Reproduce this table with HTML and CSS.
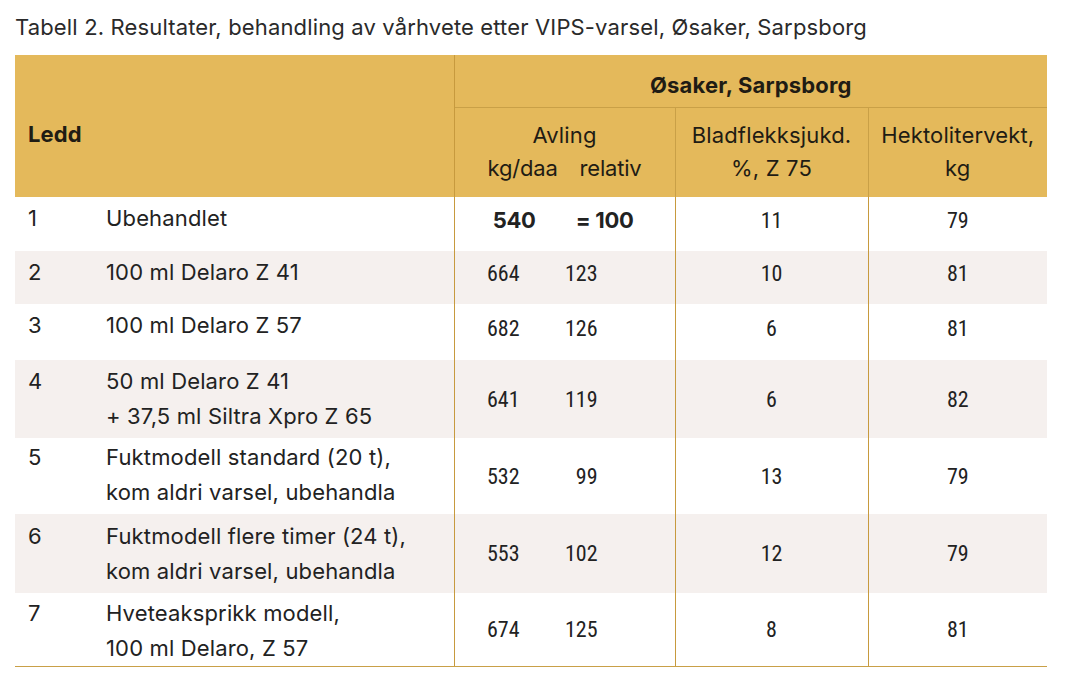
FILE: index.html
```html
<!DOCTYPE html>
<html lang="no">
<head>
<meta charset="utf-8">
<title>Tabell 2</title>
<link rel="stylesheet" href="styles.css">
</head>
<body>
<div class="page">
  <p class="caption">Tabell 2. Resultater, behandling av vårhvete etter VIPS-varsel, Øsaker, Sarpsborg</p>
  <table class="results">
    <colgroup>
      <col class="c-nr">
      <col class="c-desc">
      <col class="c-avl">
      <col class="c-blad">
      <col class="c-hekt">
    </colgroup>
    <thead>
      <tr class="h1">
        <th class="ledd" colspan="2" rowspan="2">Ledd</th>
        <th class="site" colspan="3">Øsaker, Sarpsborg</th>
      </tr>
      <tr class="h2">
        <th class="sub">Avling<br><span class="pair"><span class="a">kg/daa</span><span class="b">relativ</span></span></th>
        <th class="sub">Bladflekksjukd.<br>%, Z 75</th>
        <th class="sub last">Hektolitervekt,<br>kg</th>
      </tr>
    </thead>
    <tbody>
      <tr class="r1 single">
        <td class="nr">1</td><td class="desc">Ubehandlet</td>
        <td class="num avl ref"><span class="v1">540</span><span class="v2">= 100</span></td>
        <td class="num">11</td><td class="num">79</td>
      </tr>
      <tr class="r2 single alt">
        <td class="nr">2</td><td class="desc">100 ml Delaro Z 41</td>
        <td class="num avl"><span class="v1">664</span><span class="v2">123</span></td>
        <td class="num">10</td><td class="num">81</td>
      </tr>
      <tr class="r3 single">
        <td class="nr">3</td><td class="desc">100 ml Delaro Z 57</td>
        <td class="num avl"><span class="v1">682</span><span class="v2">126</span></td>
        <td class="num">6</td><td class="num">81</td>
      </tr>
      <tr class="r4 alt">
        <td class="nr">4</td><td class="desc">50 ml Delaro Z 41<br>+ 37,5 ml Siltra Xpro Z 65</td>
        <td class="num avl"><span class="v1">641</span><span class="v2">119</span></td>
        <td class="num">6</td><td class="num">82</td>
      </tr>
      <tr class="r5">
        <td class="nr">5</td><td class="desc">Fuktmodell standard (20 t),<br>kom aldri varsel, ubehandla</td>
        <td class="num avl"><span class="v1">532</span><span class="v2">99</span></td>
        <td class="num">13</td><td class="num">79</td>
      </tr>
      <tr class="r6 alt">
        <td class="nr">6</td><td class="desc">Fuktmodell flere timer (24 t),<br>kom aldri varsel, ubehandla</td>
        <td class="num avl"><span class="v1">553</span><span class="v2">102</span></td>
        <td class="num">12</td><td class="num">79</td>
      </tr>
      <tr class="r7">
        <td class="nr">7</td><td class="desc">Hveteaksprikk modell,<br>100 ml Delaro, Z 57</td>
        <td class="num avl"><span class="v1">674</span><span class="v2">125</span></td>
        <td class="num">8</td><td class="num">81</td>
      </tr>
    </tbody>
  </table>
</div>
</body>
</html>
```

FILE: styles.css
```css
html, body {
  margin: 0;
  padding: 0;
  background: #ffffff;
}

body {
  font-family: "Inter", "Noto Sans", sans-serif;
  color: #222222;
  letter-spacing: 0.15px;
}

.page {
  padding: 0 31px 0 15px;
}

.caption {
  margin: 0;
  height: 55px;
  box-sizing: border-box;
  padding-top: 14px;
  font-size: 22px;
  line-height: 26px;
  color: #2a2a2a;
}

.results {
  width: 1032px;
  border-collapse: collapse;
  table-layout: fixed;
  font-size: 22px;
}

.c-nr { width: 78px; }
.c-desc { width: 361px; }
.c-avl { width: 221px; }
.c-blad { width: 193px; }
.c-hekt { width: 179px; }

thead th {
  background: #e4b95b;
  color: #1f1c14;
  font-weight: 400;
  padding: 0;
}

.h1 { height: 52px; }
.h2 { height: 90px; }

.ledd {
  text-align: left;
  padding: 16px 0 0 13px;
  font-weight: 700;
  vertical-align: middle;
  border-right: 1px solid #c79a3e;
}

.site {
  font-weight: 700;
  text-align: center;
  padding-top: 8px;
  border-bottom: 1px solid #c9a047;
}

.sub {
  line-height: 33px;
  text-align: center;
  vertical-align: middle;
  border-right: 1px solid #c9a047;
}

.sub.last { border-right: none; }

.pair {
  display: inline-flex;
  gap: 22px;
  letter-spacing: -0.2px;
}

tbody td {
  padding: 0;
  line-height: 35px;
}

tbody tr.alt td { background: #f5f0ee; }

.r1 { height: 54px; }
.r2 { height: 53px; }
.r3 { height: 56px; }
.r4 { height: 78px; }
.r5 { height: 76px; }
.r6 { height: 79px; }
.r7 { height: 72px; }

.nr, .desc {
  vertical-align: top;
  padding-top: 4px;
  padding-left: 13px;
}

.r5 .nr, .r5 .desc { padding-top: 2px; }
.r6 .nr, .r6 .desc { padding-top: 5px; }
.r7 .nr, .r7 .desc { padding-top: 3px; }

.desc {
  border-right: 1px solid #c79a3e;
  white-space: nowrap;
}

.num {
  font-family: "Liberation Sans Narrow", "Roboto Condensed", "Roboto", sans-serif;
  font-stretch: condensed;
  letter-spacing: 0;
  text-align: center;
  vertical-align: middle;
  border-right: 1px solid #c79a3e;
}

.num:last-child { border-right: none; }

tr.single .num { padding-bottom: 8px; }

.avl {
  text-align: left;
  white-space: nowrap;
}

.avl .v1,
.avl .v2 {
  display: inline-block;
  text-align: right;
}

.avl .v1 { width: 65px; }
.avl .v2 { width: 78px; }

.ref {
  font-family: "Inter", "Noto Sans", sans-serif;
  font-weight: 700;
  letter-spacing: -0.3px;
}
.ref .v1 { width: 81px; }
.ref .v2 { width: 98px; }

tbody tr:last-child td { border-bottom: 1.5px solid #c9a047; }
```
